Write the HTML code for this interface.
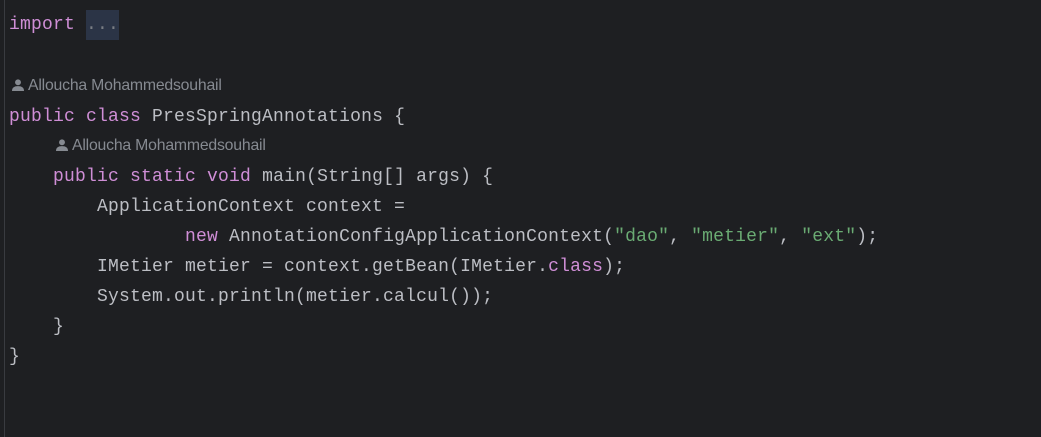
<!DOCTYPE html>
<html><head><meta charset="utf-8"><style>
body{margin:0;width:1041px;height:437px;background:#1e1f22;overflow:hidden;position:relative}
.l{position:absolute;left:9px;font-family:"Liberation Mono",monospace;font-size:18px;letter-spacing:0.2px;color:#bcbec4;white-space:pre;line-height:30px}
.k{color:#cf8ed6}.s{color:#6aab73}
.f{background:#2b3446;color:#7a7e85;display:inline-block;height:30px;vertical-align:top}
.a{position:absolute;font-family:"Liberation Sans",sans-serif;font-size:15.8px;color:#868a91;line-height:20px;white-space:pre;letter-spacing:-0.2px}
.a svg{vertical-align:-1px;margin-right:4px}
.g{position:absolute;left:0;width:1px;background:#393b40}
</style></head><body>
<div class="g" style="top:0;height:437px;left:4px"></div>
<div class="l" style="top:10px"><span class="k">import</span> <span class="f">...</span></div>
<div class="a" style="left:12px;top:76px"><svg width="12" height="12" viewBox="0 0 11 11"><circle cx="5.5" cy="3" r="2.7" fill="#868a91"/><path d="M0 11 Q0 6.5 5.5 6.5 Q11 6.5 11 11Z" fill="#868a91"/></svg>Alloucha Mohammedsouhail</div>
<div class="l" style="top:102px"><span class="k">public class</span> PresSpringAnnotations {</div>
<div class="a" style="left:56px;top:136px"><svg width="12" height="12" viewBox="0 0 11 11"><circle cx="5.5" cy="3" r="2.7" fill="#868a91"/><path d="M0 11 Q0 6.5 5.5 6.5 Q11 6.5 11 11Z" fill="#868a91"/></svg>Alloucha Mohammedsouhail</div>
<div class="l" style="top:162px">    <span class="k">public static void</span> main(String[] args) {</div>
<div class="l" style="top:192px">        ApplicationContext context =</div>
<div class="l" style="top:222px">                <span class="k">new</span> AnnotationConfigApplicationContext(<span class="s">"dao"</span>, <span class="s">"metier"</span>, <span class="s">"ext"</span>);</div>
<div class="l" style="top:252px">        IMetier metier = context.getBean(IMetier.<span class="k">class</span>);</div>
<div class="l" style="top:282px">        System.out.println(metier.calcul());</div>
<div class="l" style="top:312px">    }</div>
<div class="l" style="top:342px">}</div>
</body></html>
